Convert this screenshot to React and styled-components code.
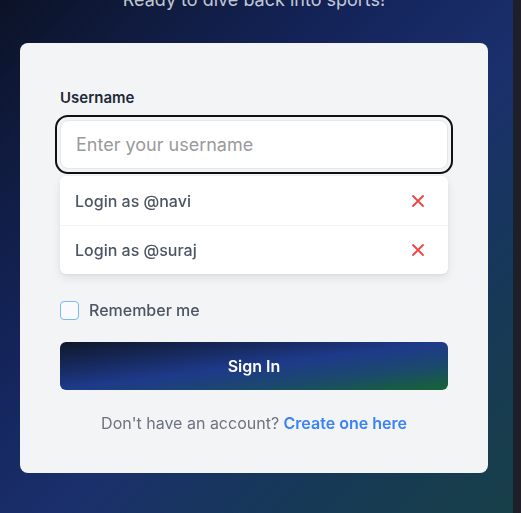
import React from "react";
import styled, { createGlobalStyle } from "styled-components";

const Global = createGlobalStyle`
  html, body { margin: 0; padding: 0; height: 100%; }
  body {
    font-family: Inter, "Noto Sans", "Liberation Sans", sans-serif;
    overflow: hidden;
  }
  #root { height: 100%; }
  * { box-sizing: border-box; }
`;

const Shell = styled.div`
  display: flex;
  width: 521px;
  height: 513px;
`;

const Stage = styled.main`
  flex: 1;
  display: flex;
  flex-direction: column;
  background: linear-gradient(135deg, #0c1327 0%, #14245a 35%, #1a2f6c 55%, #163a55 80%, #173f48 100%);
  overflow: hidden;
`;

const Scrollbar = styled.div`
  width: 8px;
  background: #1d2028;
`;

const Column = styled.div`
  width: 468px;
  margin: -14px 0 0 20px;
  display: flex;
  flex-direction: column;
`;

const Title = styled.h2`
  margin: 0 0 29px;
  font-size: 18px;
  line-height: 28px;
  font-weight: 400;
  text-align: center;
  color: rgba(226, 232, 240, 0.85);
`;

const Card = styled.section`
  background: #f3f4f6;
  border-radius: 8px;
  padding: 45px 40px 38px;
  display: flex;
  flex-direction: column;
`;

const Label = styled.label`
  font-size: 15px;
  line-height: 20px;
  font-weight: 600;
  color: #1f2937;
  margin-bottom: 12px;
`;

const Input = styled.input`
  height: 49px;
  width: 100%;
  border: 1px solid #e5e7eb;
  border-radius: 8px;
  background: #ffffff;
  padding: 0 15px;
  font-family: inherit;
  font-size: 18px;
  color: #111827;
  outline: 2px solid #111111;
  outline-offset: 3px;
  caret-color: #333;
  &::placeholder { color: #9a9a9a; }
`;

const Suggestions = styled.ul`
  list-style: none;
  margin: 7px 0 0;
  padding: 0;
  background: #ffffff;
  border-radius: 6px;
  box-shadow: 0 4px 10px rgba(0, 0, 0, 0.08), 0 1px 3px rgba(0, 0, 0, 0.06);
  overflow: hidden;
`;

const Suggestion = styled.li`
  display: flex;
  align-items: center;
  justify-content: space-between;
  height: 49px;
  padding: 0 23px 0 15px;
  font-size: 16px;
  font-weight: 500;
  color: #4b5563;
  border-top: ${(p) => (p.$first ? "none" : "1px solid #f3f4f6")};
`;

const Remove = styled.button`
  border: none;
  background: none;
  padding: 0;
  display: flex;
  cursor: pointer;
`;

const CheckRow = styled.label`
  display: flex;
  align-items: center;
  gap: 10px;
  margin-top: 24px;
  height: 24px;
  font-size: 16px;
  font-weight: 500;
  color: #4b5563;
`;

const Box = styled.span`
  width: 19px;
  height: 19px;
  border: 1.5px solid #7cb8f5;
  border-radius: 4px;
  background: #f8fafc;
`;

const Submit = styled.button`
  margin-top: 20px;
  height: 48px;
  border: none;
  border-radius: 6px;
  background: linear-gradient(to bottom right, #0f172a 0%, #1e3a8a 50%, #1b4a6a 75%, #166534 100%);
  color: #ffffff;
  font-family: inherit;
  font-size: 16px;
  font-weight: 600;
`;

const Footer = styled.p`
  margin: 21px 0 0;
  text-align: center;
  font-size: 16px;
  line-height: 24px;
  color: #6b7280;
`;

const Link = styled.a`
  color: #3b82f6;
  font-weight: 600;
  text-decoration: none;
`;

const Cross = () => (
  <svg width="14" height="14" viewBox="0 0 14 14" fill="none" stroke="#ef4444" strokeWidth="1.8" strokeLinecap="round">
    <path d="M2 2 L12 12 M12 2 L2 12" />
  </svg>
);

const users = ["navi", "suraj"];

export default function App() {
  return (
    <>
      <Global />
      <Shell>
        <Stage>
          <Column>
            <Title>Ready to dive back into sports!</Title>
            <Card>
              <Label htmlFor="username">Username</Label>
              <Input id="username" placeholder="Enter your username" autoFocus />
              <Suggestions>
                {users.map((u, i) => (
                  <Suggestion key={u} $first={i === 0}>
                    Login as @{u}
                    <Remove aria-label={`Remove ${u}`}>
                      <Cross />
                    </Remove>
                  </Suggestion>
                ))}
              </Suggestions>
              <CheckRow>
                <Box />
                Remember me
              </CheckRow>
              <Submit>Sign In</Submit>
              <Footer>
                Don't have an account? <Link href="#">Create one here</Link>
              </Footer>
            </Card>
          </Column>
        </Stage>
        <Scrollbar />
      </Shell>
    </>
  );
}
